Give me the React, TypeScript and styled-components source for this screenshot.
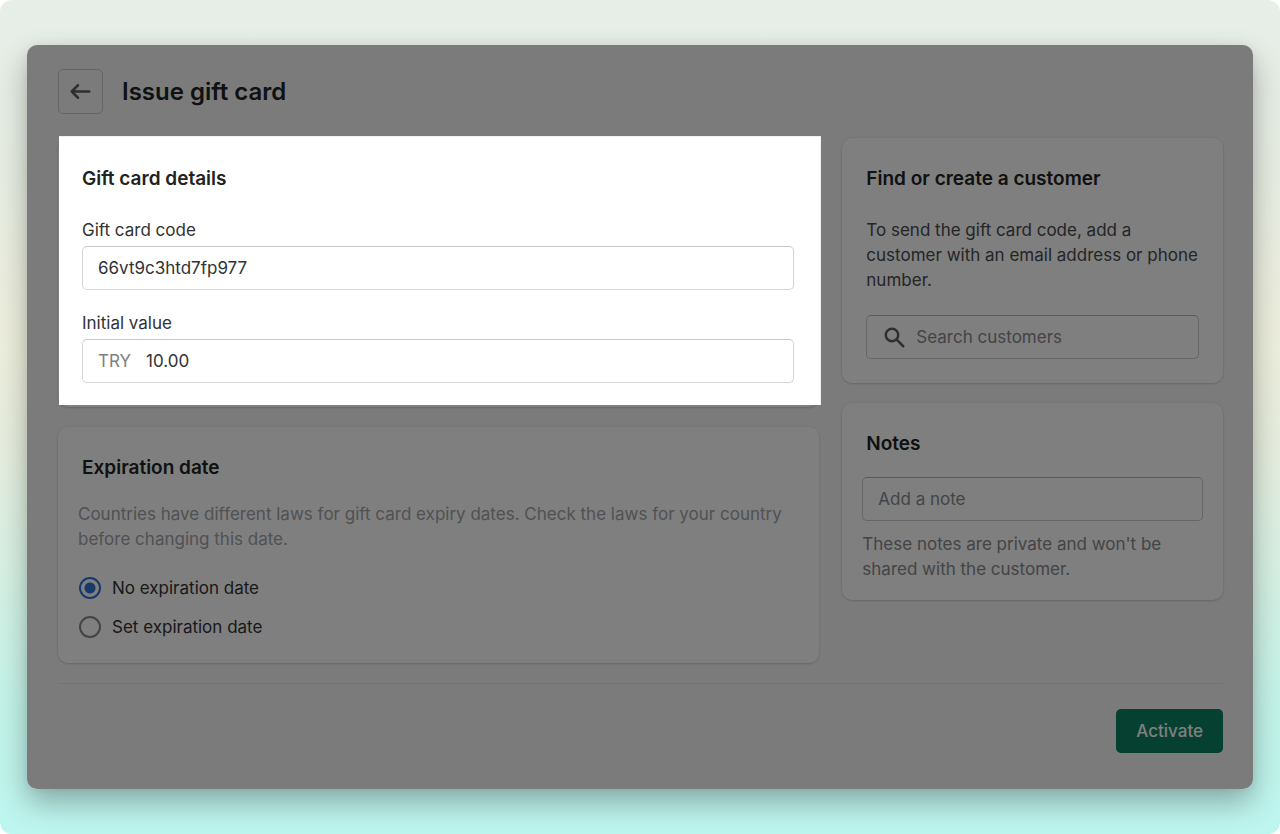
import React, { useState } from "react";
import styled, { createGlobalStyle } from "styled-components";

const GlobalStyle = createGlobalStyle`
  *, *::before, *::after { box-sizing: border-box; }
  html { background: #ffffff; }
  body {
    margin: 0;
    font-family: Inter, "Liberation Sans", sans-serif;
    font-size: 17px;
    line-height: 25px;
    color: #303234;
  }
  button, input { font: inherit; }
`;

const Backdrop = styled.div`
  min-height: 100vh;
  padding: 45px 27px;
  border-radius: 12px;
  background: linear-gradient(180deg, #e7eee8 0%, #e8eee4 20%, #eeefdd 42%, #e6eedf 54%, #d5f1e4 70%, #c3f4ea 85%, #bdf6ef 100%);
`;

const PanelShadow = styled.div`
  border-radius: 10px;
  box-shadow: 0 14px 30px rgba(0, 0, 0, 0.3), 0 0 10px rgba(0, 0, 0, 0.06);
`;

const Panel = styled.main`
  position: relative;
  overflow: clip;
  padding: 24px 30px 36px 31px;
  border-radius: 10px;
  background: #f6f6f6;
`;

const Scrim = styled.div`
  position: absolute;
  inset: 0;
  z-index: 1;
  background: rgba(0, 0, 0, 0.5);
  pointer-events: none;
`;

const Header = styled.header`
  display: flex;
  align-items: center;
  gap: 19px;
  margin-bottom: 24px;
`;

const BackButton = styled.button`
  display: flex;
  align-items: center;
  justify-content: center;
  width: 45px;
  height: 45px;
  padding: 0;
  border: 1px solid #cccccc;
  border-radius: 5px;
  background: transparent;
  color: #5c5f62;
`;

const Title = styled.h1`
  margin: 0;
  font-size: 24px;
  font-weight: 600;
  line-height: 33px;
  color: #202223;
`;

const Columns = styled.div`
  display: grid;
  grid-template-columns: minmax(0, 2fr) minmax(0, 1fr);
  gap: 23px;
  align-items: start;
`;

const Column = styled.div`
  display: grid;
  gap: 20px;
`;

const Card = styled.section<{ $inset?: number; $bottom?: number }>`
  padding: 29px ${(p) => p.$inset ?? 24}px ${(p) => p.$bottom ?? 24}px;
  border-radius: 10px;
  background: #ffffff;
  box-shadow: 0 0 3px rgba(23, 24, 24, 0.07), 0 1px 2px rgba(0, 0, 0, 0.14);
`;

const SpotlitCard = styled(Card)`
  padding: 0;
`;

const Spotlight = styled.div`
  position: relative;
  z-index: 2;
  margin: -2px -2px 2px 1px;
  padding: 31px 27px 22px 23px;
  background: #ffffff;
  box-shadow: inset -1px 1px 0 #f1f1f1;
`;

const CardTitle = styled.h2<{ $indent?: number; $gap?: number }>`
  margin: 0 0 ${(p) => p.$gap ?? 27}px ${(p) => p.$indent ?? 0}px;
  font-size: 19px;
  font-weight: 600;
  line-height: 24px;
  color: #202223;
`;

const Field = styled.div`
  & + & { margin-top: 21px; }
`;

const Label = styled.label`
  display: block;
  margin-bottom: 3px;
`;

const InputFrame = styled.div<{ $dim?: boolean }>`
  display: flex;
  align-items: center;
  height: 44px;
  padding: 1px 15px 0;
  gap: ${(p) => (p.$dim ? 9 : 15)}px;
  border: 1px solid ${(p) => (p.$dim ? "#c8cacc" : "#d2d4d6")};
  border-top-color: ${(p) => (p.$dim ? "#b2b5b8" : "#c4c6c8")};
  border-radius: 5px;
  background: #ffffff;
`;

const Input = styled.input`
  flex: 1;
  min-width: 0;
  padding: 0;
  border: 0;
  outline: 0;
  background: transparent;
  color: #303234;
  &::placeholder { color: #86888b; opacity: 1; }
`;

const Currency = styled.span`
  color: #7d8083;
`;

const Paragraph = styled.p<{ $tone?: string }>`
  margin: 0;
  color: ${(p) => p.$tone ?? "#484a4c"};
`;

const SearchArea = styled.div`
  margin-top: 22px;
`;

const NoteHelp = styled(Paragraph)`
  margin-top: 11px;
`;

const Choices = styled.fieldset`
  display: grid;
  gap: 15px;
  margin: 24px 0 0;
  padding: 0;
  border: 0;
`;

const Choice = styled.label`
  display: flex;
  align-items: center;
  gap: 11px;
  height: 24px;
  padding-left: 1px;
  color: #303234;
`;

const Radio = styled.input`
  appearance: none;
  width: 22px;
  height: 22px;
  margin: 0;
  border: 2px solid #85898d;
  border-radius: 50%;
  &:checked {
    border-color: #2f74d6;
    background: radial-gradient(circle, #2f74d6 0 5px, transparent 6px);
  }
`;

const Footer = styled.footer`
  display: flex;
  justify-content: flex-end;
  margin-top: 20px;
  padding-top: 25px;
  border-top: 1px solid #e8e8e8;
`;

const PrimaryButton = styled.button`
  height: 44px;
  padding: 1px 20px 0;
  border: 0;
  border-radius: 5px;
  background: #0b8060;
  color: #ffffff;
  font-weight: 500;
`;

const ArrowLeftIcon = () => (
  <svg width="25" height="25" viewBox="0 0 20 20" fill="currentColor" aria-hidden="true">
    <path d="M17 9H5.414l3.293-3.293a.999.999 0 1 0-1.414-1.414l-5 5a.999.999 0 0 0 0 1.414l5 5a.997.997 0 0 0 1.414 0 .999.999 0 0 0 0-1.414L5.414 11H17a1 1 0 1 0 0-2z" />
  </svg>
);

const SearchIcon = () => (
  <svg width="25" height="25" viewBox="0 0 20 20" fill="#5c5f62" aria-hidden="true">
    <path d="M8 12a4 4 0 1 1 0-8 4 4 0 0 1 0 8zm9.707 4.293-4.82-4.82A5.968 5.968 0 0 0 14 8 6 6 0 0 0 2 8a6 6 0 0 0 6 6 5.968 5.968 0 0 0 3.473-1.113l4.82 4.82a.997.997 0 0 0 1.414 0 .999.999 0 0 0 0-1.414z" />
  </svg>
);

export default function App() {
  const [code, setCode] = useState("66vt9c3htd7fp977");
  const [amount, setAmount] = useState("10.00");

  return (
    <>
      <GlobalStyle />
      <Backdrop>
        <PanelShadow>
          <Panel>
            <Header>
              <BackButton type="button" aria-label="Back">
                <ArrowLeftIcon />
              </BackButton>
              <Title>Issue gift card</Title>
            </Header>

            <Columns>
              <Column>
                <SpotlitCard>
                  <Spotlight>
                    <CardTitle>Gift card details</CardTitle>
                    <Field>
                      <Label htmlFor="code">Gift card code</Label>
                      <InputFrame>
                        <Input id="code" value={code} onChange={(e) => setCode(e.target.value)} />
                      </InputFrame>
                    </Field>
                    <Field>
                      <Label htmlFor="amount">Initial value</Label>
                      <InputFrame>
                        <Currency>TRY</Currency>
                        <Input id="amount" value={amount} onChange={(e) => setAmount(e.target.value)} />
                      </InputFrame>
                    </Field>
                  </Spotlight>
                </SpotlitCard>

                <Card $inset={20}>
                  <CardTitle $indent={4} $gap={22}>Expiration date</CardTitle>
                  <Paragraph $tone="#a0a3a8">
                    Countries have different laws for gift card expiry dates. Check the laws for your country before
                    changing this date.
                  </Paragraph>
                  <Choices aria-label="Expiration date">
                    <Choice>
                      <Radio type="radio" name="expiration" defaultChecked />
                      No expiration date
                    </Choice>
                    <Choice>
                      <Radio type="radio" name="expiration" />
                      Set expiration date
                    </Choice>
                  </Choices>
                </Card>
              </Column>

              <Column>
                <Card>
                  <CardTitle>Find or create a customer</CardTitle>
                  <Paragraph>
                    To send the gift card code, add a customer with an email address or phone number.
                  </Paragraph>
                  <SearchArea>
                    <InputFrame $dim>
                      <SearchIcon />
                      <Input type="search" aria-label="Search customers" placeholder="Search customers" />
                    </InputFrame>
                  </SearchArea>
                </Card>

                <Card $inset={20} $bottom={18}>
                  <CardTitle $indent={4} $gap={21}>Notes</CardTitle>
                  <InputFrame $dim>
                    <Input aria-label="Notes" placeholder="Add a note" />
                  </InputFrame>
                  <NoteHelp $tone="#86888b">
                    These notes are private and won't be shared with the customer.
                  </NoteHelp>
                </Card>
              </Column>
            </Columns>

            <Footer>
              <PrimaryButton type="button">Activate</PrimaryButton>
            </Footer>
            <Scrim />
          </Panel>
        </PanelShadow>
      </Backdrop>
    </>
  );
}
